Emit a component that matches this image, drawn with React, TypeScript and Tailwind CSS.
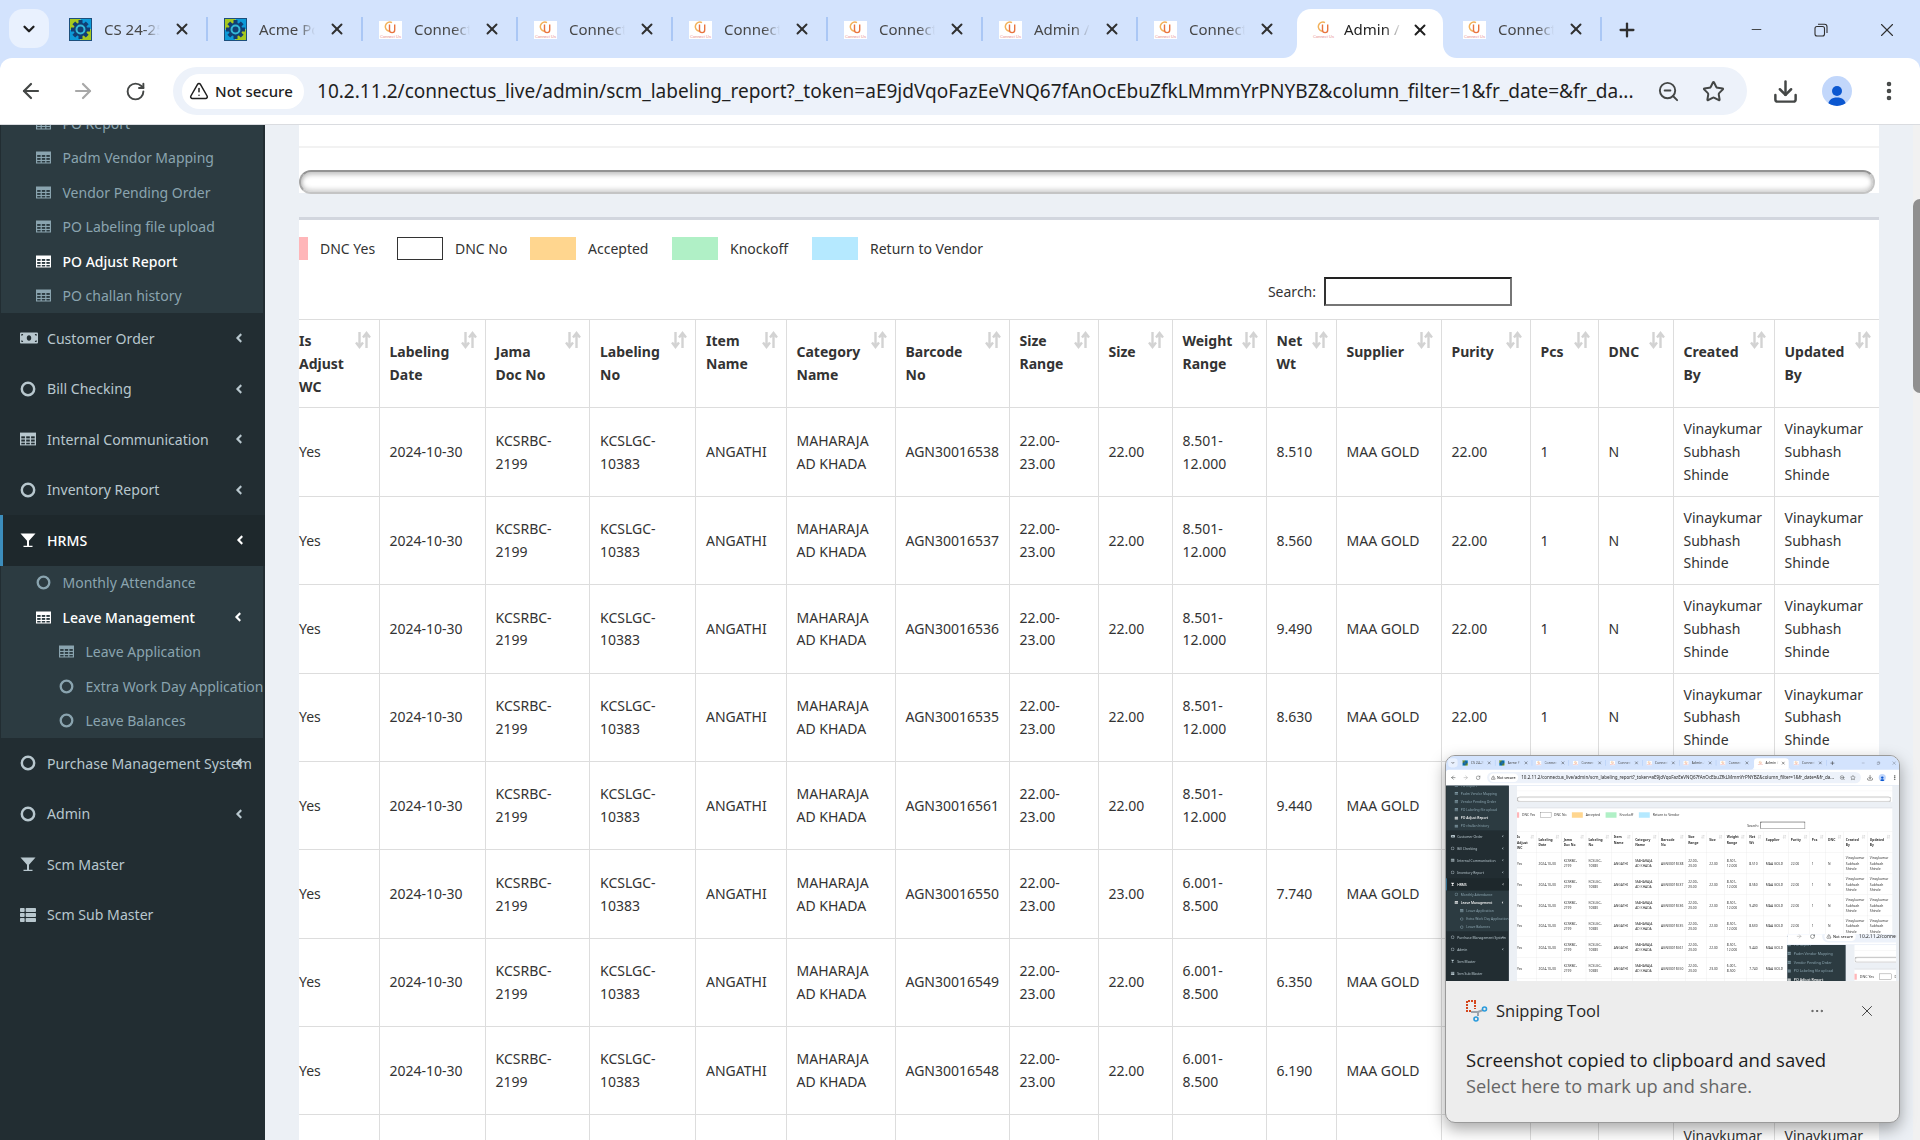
import React from 'react';
import {
  ArrowLeft,
  ArrowRight,
  ChevronDown,
  Download,
  EllipsisVertical,
  Minus,
  MoreHorizontal,
  Plus,
  RotateCw,
  Star,
  TriangleAlert,
  X,
  ZoomOut,
} from 'lucide-react';
import { FaAngleLeft, FaMoneyBill, FaThList } from 'react-icons/fa';

const tabs = [
  { title: 'CS 24-25', icon: 'gear' },
  { title: 'Acme Portal', icon: 'gear' },
  { title: 'Connectus', icon: 'cu' },
  { title: 'Connectus', icon: 'cu' },
  { title: 'Connectus', icon: 'cu' },
  { title: 'Connectus', icon: 'cu' },
  { title: 'Admin / Scm', icon: 'cu' },
  { title: 'Connectus', icon: 'cu' },
  { title: 'Admin / Scm', icon: 'cu', active: true },
  { title: 'Connectus', icon: 'cu' },
];

const URL_TEXT =
  '10.2.11.2/connectus_live/admin/scm_labeling_report?_token=aE9jdVqoFazEeVNQ67fAnOcEbuZfkLMmmYrPNYBZ&column_filter=1&fr_date=&fr_da...';

const legend = [
  { label: 'DNC Yes', item: 'w-[98px]', swatch: 'w-[9px] bg-[#ffb6b9]' },
  { label: 'DNC No', item: 'w-[133px]', swatch: 'w-[46px] bg-white border border-[#333]' },
  { label: 'Accepted', item: 'w-[142px]', swatch: 'w-[46px] bg-[#ffd68f]' },
  { label: 'Knockoff', item: 'w-[140px]', swatch: 'w-[46px] bg-[#b0f0c6]' },
  { label: 'Return to Vendor', item: 'w-[200px]', swatch: 'w-[46px] bg-[#b5e9ff]' },
];

const columns = [
  { lines: ['Is', 'Adjust', 'WC'], width: 'w-[80px]' },
  { lines: ['Labeling', 'Date'], width: 'w-[106px]' },
  { lines: ['Jama', 'Doc No'], width: 'w-[104.5px]' },
  { lines: ['Labeling', 'No'], width: 'w-[106px]' },
  { lines: ['Item', 'Name', '\u00a0'], width: 'w-[90.5px]' },
  { lines: ['Category', 'Name'], width: 'w-[109px]' },
  { lines: ['Barcode', 'No'], width: 'w-[114px]' },
  { lines: ['Size', 'Range', '\u00a0'], width: 'w-[89px]' },
  { lines: ['Size', '\u00a0'], width: 'w-[74px]' },
  { lines: ['Weight', 'Range', '\u00a0'], width: 'w-[94px]' },
  { lines: ['Net', 'Wt', '\u00a0'], width: 'w-[70px]' },
  { lines: ['Supplier', '\u00a0'], width: 'w-[105px]' },
  { lines: ['Purity', '\u00a0'], width: 'w-[89px]' },
  { lines: ['Pcs', '\u00a0'], width: 'w-[68px]' },
  { lines: ['DNC', '\u00a0'], width: 'w-[75px]' },
  { lines: ['Created', 'By'], width: 'w-[101px]' },
  { lines: ['Updated', 'By'], width: 'w-[105px]' },
];

const rows = [
  ['AGN30016538', '22.00', '8.501-12.000', '8.510'],
  ['AGN30016537', '22.00', '8.501-12.000', '8.560'],
  ['AGN30016536', '22.00', '8.501-12.000', '9.490'],
  ['AGN30016535', '22.00', '8.501-12.000', '8.630'],
  ['AGN30016561', '22.00', '8.501-12.000', '9.440'],
  ['AGN30016550', '23.00', '6.001-8.500', '7.740'],
  ['AGN30016549', '22.00', '6.001-8.500', '6.350'],
  ['AGN30016548', '22.00', '6.001-8.500', '6.190'],
  ['AGN30016547', '22.00', '6.001-8.500', '6.480'],
];

function GearIcon() {
  return (
    <svg width="23" height="23" viewBox="0 0 23 23" className="shrink-0">
      <rect width="11.5" height="11.5" fill="#a6c81e" />
      <rect x="11.5" width="11.5" height="11.5" fill="#0d9ad8" />
      <rect y="11.5" width="11.5" height="11.5" fill="#0d9ad8" />
      <rect x="11.5" y="11.5" width="11.5" height="11.5" fill="#a6c81e" />
      <rect x="0.5" y="0.5" width="22" height="22" fill="none" stroke="#1d4f7c" />
      <g stroke="#123f73" strokeWidth="4">
        <path d="M11.5 2v19M2 11.5h19M4.8 4.8l13.4 13.4M18.2 4.8L4.8 18.2" />
      </g>
      <circle cx="11.5" cy="11.5" r="6.8" fill="#123f73" />
      <circle cx="11.5" cy="11.5" r="4" fill="none" stroke="#33b8d8" strokeWidth="2" />
    </svg>
  );
}

function CuIcon() {
  return (
    <svg width="23" height="23" viewBox="0 0 23 23" className="shrink-0">
      <rect y="3" width="23" height="18" fill="#fff" />
      <path d="M13 4.6a4.6 4.6 0 1 0 -3 8.6" fill="none" stroke="#f2b15a" strokeWidth="1.5" />
      <path d="M10.5 6.5v5.5a2.6 2.6 0 0 0 5.2 0V6.5" fill="none" stroke="#e8743f" strokeWidth="1.4" />
      <text x="11.5" y="20" textAnchor="middle" fontSize="4" fill="#e88a8a" fontFamily="Liberation Sans, sans-serif">
        Connect Us
      </text>
    </svg>
  );
}

function Flare({ side }: { side: 'left' | 'right' }) {
  return (
    <svg
      width="14"
      height="14"
      viewBox="0 0 14 14"
      className={side === 'left' ? 'absolute bottom-0 left-[-14px]' : 'absolute bottom-0 right-[-14px] -scale-x-100'}
    >
      <path d="M0 14C8 14 14 8 14 0V14Z" fill="#fff" />
    </svg>
  );
}

function TabStrip() {
  return (
    <div className="flex h-[58px] shrink-0 items-start">
      <div className="ml-[9px] mt-[9px] flex h-[39px] w-[40px] shrink-0 items-center justify-center rounded-[14px] bg-[#e9f1fe]">
        <ChevronDown size={18} strokeWidth={3} className="text-[#1f1f1f]" />
      </div>
      <div className="ml-[4px] flex h-full">
        {tabs.map((tab, i) => {
          if (tab.active) {
            return (
              <div key={i} className="relative ml-[4px] mr-[4px] mt-[9px] flex h-[49px] w-[146px] shrink-0 items-center rounded-t-[14px] bg-white pb-[8px] pl-[15px]">
                <Flare side="left" />
                <Flare side="right" />
                <CuIcon />
                <span className="ml-[9px] w-[58px] overflow-hidden whitespace-nowrap text-[15px] text-[#1f1f1f] [mask-image:linear-gradient(to_right,black_70%,transparent)]">
                  {tab.title}
                </span>
                <X size={18} strokeWidth={2.6} className="ml-[9px] text-[#1f1f1f]" />
              </div>
            );
          }
          const sep = i === 7 ? '' : 'after:absolute after:right-0 after:top-[17px] after:h-[24px] after:w-[2px] after:bg-[#aac7f5]';
          return (
            <div key={i} className={`relative flex h-full w-[155px] shrink-0 items-center pl-[16px] ${sep}`}>
              <div className="flex w-[23px] shrink-0 justify-center">{tab.icon === 'gear' ? <GearIcon /> : <CuIcon />}</div>
              <span className="ml-[12px] w-[56px] overflow-hidden whitespace-nowrap text-[15px] text-[#474747] [mask-image:linear-gradient(to_right,black_70%,transparent)]">
                {tab.title}
              </span>
              <X size={18} strokeWidth={2.6} className="ml-[13px] text-[#303030]" />
            </div>
          );
        })}
      </div>
      <Plus size={22} strokeWidth={2.5} className="ml-[14px] mt-[19px] shrink-0 text-[#303030]" />
      <Minus size={15} strokeWidth={1.4} className="ml-[111px] mt-[22px] shrink-0 text-[#303030]" />
      <svg width="16" height="16" viewBox="0 0 16 16" className="ml-[49px] mt-[22px] shrink-0" fill="none" stroke="#303030" strokeWidth="1.1">
        <rect x="2" y="4.5" width="9.5" height="9.5" rx="2" />
        <path d="M5 2.2h6.5a2.5 2.5 0 0 1 2.5 2.5V11" />
      </svg>
      <X size={22} strokeWidth={1.2} className="ml-[47px] mt-[19px] shrink-0 text-[#303030]" />
    </div>
  );
}

function Toolbar() {
  return (
    <div className="flex h-[66px] shrink-0 items-center rounded-t-[12px] bg-white">
      <ArrowLeft size={24} strokeWidth={2.2} className="ml-[19px] shrink-0 text-[#444746]" />
      <ArrowRight size={24} strokeWidth={2.2} className="ml-[28px] shrink-0 text-[#a8a8a8]" />
      <RotateCw size={21} strokeWidth={2.2} className="ml-[30px] shrink-0 text-[#444746]" />
      <div className="ml-[27px] flex h-[48px] w-[1574px] shrink-0 items-center rounded-full bg-[#edf2fa] pl-[9px]">
        <div className="flex h-[35px] w-[122px] shrink-0 items-center rounded-full bg-white pl-[7px]">
          <TriangleAlert size={20} strokeWidth={1.8} className="text-[#1f1f1f]" />
          <span className="ml-[6px] whitespace-nowrap text-[15px] font-medium text-[#1f1f1f]">Not secure</span>
        </div>
        <span className="ml-[13px] w-[1321px] shrink-0 overflow-hidden whitespace-nowrap text-[19.05px] text-[#1f1f1f]">{URL_TEXT}</span>
        <ZoomOut size={23} strokeWidth={2} className="ml-[19px] shrink-0 text-[#444746]" />
        <Star size={23} strokeWidth={2.1} className="ml-[22px] shrink-0 text-[#444746]" />
      </div>
      <Download size={27} strokeWidth={2.2} className="ml-[25px] shrink-0 text-[#444746]" />
      <div className="ml-[23px] flex h-[30px] w-[30px] shrink-0 items-end justify-center overflow-hidden rounded-full bg-[#c2d7fb]">
        <svg width="20" height="24" viewBox="0 0 20 24" fill="#0b57d0">
          <circle cx="10" cy="9" r="5" />
          <path d="M1 24c0-6 4-8.5 9-8.5s9 2.5 9 8.5Z" />
        </svg>
      </div>
      <EllipsisVertical size={24} strokeWidth={2.6} className="ml-[25px] shrink-0 text-[#444746]" />
    </div>
  );
}

type IconProps = { size?: number; className?: string };
type IconType = React.ComponentType<IconProps>;

// the page's older icon set: table with a solid head row and a 3x3 grid
function GridIcon({ size = 15, className, hole }: IconProps & { hole: string }) {
  return (
    <svg width={size} height={size} viewBox="0 0 15 15" className={className}>
      <path d="M0 1.5h15v12H0Z" fill="currentColor" />
      {[5, 8, 11].map((y) =>
        [1.2, 5.8, 10.4].map((x) => <rect key={`${x}-${y}`} x={x} y={y} width="3.4" height={y === 11 ? 1.5 : 1.9} fill={hole} />),
      )}
    </svg>
  );
}

const TableIcon = (props: IconProps) => <GridIcon {...props} hole="#2c3b41" />;
const TableIconDark = (props: IconProps) => <GridIcon {...props} hole="#222d32" />;

function RingIcon({ size = 15, className }: IconProps) {
  return (
    <svg width={size} height={size} viewBox="0 0 15 15" className={className}>
      <circle cx="7.5" cy="7.5" r="5.8" fill="none" stroke="currentColor" strokeWidth="2.3" />
    </svg>
  );
}

function GlassIcon({ size = 16, className }: IconProps) {
  return (
    <svg width={size} height={size} viewBox="0 0 16 16" className={className}>
      <path d="M0.5 1.5h15L9 8.7v5h3.5V15h-9v-1.3H7v-5Z" fill="currentColor" />
    </svg>
  );
}

function SubItem({ icon: Icon, label, active, nested, chevron }: { icon: IconType; label: string; active?: boolean; nested?: boolean; chevron?: boolean }) {
  return (
    <div className={`relative flex h-[34.5px] items-center ${nested ? 'pl-[58px]' : 'pl-[35px]'} ${active ? 'text-white font-medium' : 'text-[#8aa4af]'}`}>
      <Icon size={15} className="shrink-0" />
      <span className="ml-[11.5px] text-[14px]">{label}</span>
      {chevron && <FaAngleLeft size={14} className="absolute left-[230px] text-white" />}
    </div>
  );
}

function MainItem({ icon: Icon, label, active, chevron = true, iconSize = 16 }: { icon: IconType; label: string; active?: boolean; chevron?: boolean; iconSize?: number }) {
  return (
    <div className={`relative flex h-[50.5px] items-center ${active ? 'border-l-[3px] border-[#3c8dbc] bg-[#1e282c] pl-[17px] font-medium text-white' : 'pl-[20px] text-[#b8c7ce]'}`}>
      <div className="flex w-[27px] shrink-0 items-center">
        <Icon size={iconSize} />
      </div>
      <span className="text-[14.1px]">{label}</span>
      {chevron && <FaAngleLeft size={14} className={`${active ? 'left-[230px] text-white' : 'left-[232px] text-[#b8c7ce]'} absolute`} />}
    </div>
  );
}

function Sidebar() {
  return (
    <div className="w-[265px] shrink-0 overflow-hidden whitespace-nowrap bg-[#222d32]">
      <div className="ml-px mr-[2px] -mt-[19px] bg-[#2c3b41]">
        <SubItem icon={TableIcon} label="PO Report" />
        <SubItem icon={TableIcon} label="Padm Vendor Mapping" />
        <SubItem icon={TableIcon} label="Vendor Pending Order" />
        <SubItem icon={TableIcon} label="PO Labeling file upload" />
        <SubItem icon={TableIcon} label="PO Adjust Report" active />
        <SubItem icon={TableIcon} label="PO challan history" />
      </div>
      <MainItem icon={FaMoneyBill} label="Customer Order" iconSize={18} />
      <MainItem icon={RingIcon} label="Bill Checking" />
      <MainItem icon={TableIconDark} label="Internal Communication" />
      <MainItem icon={RingIcon} label="Inventory Report" />
      <MainItem icon={GlassIcon} label="HRMS" active />
      <div className="ml-px mr-[2px] bg-[#2c3b41]">
        <SubItem icon={RingIcon} label="Monthly Attendance" />
        <SubItem icon={TableIcon} label="Leave Management" active chevron />
        <SubItem icon={TableIcon} label="Leave Application" nested />
        <SubItem icon={RingIcon} label="Extra Work Day Application" nested />
        <SubItem icon={RingIcon} label="Leave Balances" nested />
      </div>
      <MainItem icon={RingIcon} label="Purchase Management System" />
      <MainItem icon={RingIcon} label="Admin" />
      <MainItem icon={GlassIcon} label="Scm Master" chevron={false} />
      <MainItem icon={FaThList} label="Scm Sub Master" chevron={false} />
    </div>
  );
}

function SortIcon() {
  return (
    <svg width="16" height="18" viewBox="0 0 16 18" className="absolute right-[8px] top-[11px]" fill="none" stroke="#d3d3d3" strokeWidth="2.4">
      <path d="M4.5 1v14M1 11.5l3.5 4.5 3.5-4.5" />
      <path d="M11.5 17V3M8 6.5 11.5 2 15 6.5" />
    </svg>
  );
}

function ReportTable() {
  return (
    <table className="w-[1580px] table-fixed border-collapse text-[14px] leading-[22.86px] text-[#333]">
      <thead>
        <tr>
          {columns.map((col, i) => (
            <th key={i} className={`relative border border-[#ddd] px-[10px] pb-[8.8px] pt-[10px] text-left align-middle font-bold ${col.width} ${i === 0 ? 'border-l-0 pl-0' : ''} ${i === 16 ? 'border-r-0' : ''}`}>
              {col.lines.map((line, j) => (
                <div key={j}>{line}</div>
              ))}
              <SortIcon />
            </th>
          ))}
        </tr>
      </thead>
      <tbody>
        {rows.map((row, i) => {
          const cells = ['Yes', '2024-10-30', 'KCSRBC-2199', 'KCSLGC-10383', 'ANGATHI', 'MAHARAJA AD KHADA', row[0], '22.00-23.00', row[1], row[2], row[3], 'MAA GOLD', '22.00', '1', 'N', 'Vinaykumar Subhash Shinde', 'Vinaykumar Subhash Shinde'];
          return (
            <tr key={i}>
              {cells.map((cell, j) => (
                <td key={j} className={`border border-[#ddd] px-[10px] pb-[8.8px] pt-[10px] align-middle ${j === 0 ? 'border-l-0 pl-0' : ''} ${j === 16 ? 'border-r-0' : ''}`}>
                  {cell}
                </td>
              ))}
            </tr>
          );
        })}
      </tbody>
    </table>
  );
}

function Content() {
  return (
    <div className="min-w-0 flex-1 overflow-hidden bg-[#ecf0f5] pl-[34px] pr-[41px]">
      <div className="h-[23px] border-b-2 border-[#f2f2f2] bg-white" />
      <div className="h-[45px] bg-white pr-[4px] pt-[22px]">
        <div className="h-[24px] rounded-full border-2 border-b-[#c4c4c4] border-l-[#a5a5a5] border-r-[#c4c4c4] border-t-[#939393] bg-white shadow-[inset_0_3px_4px_rgba(0,0,0,0.22),inset_0_-3px_4px_rgba(0,0,0,0.16)]" />
      </div>
      <div className="mt-[24px] border-t-[3px] border-[#d2d6de] bg-white pt-[17px]">
        <div className="flex h-[23px] items-center text-[14px] text-[#333]">
          {legend.map((l) => (
            <div key={l.label} className={`flex h-full shrink-0 items-center ${l.item}`}>
              <span className={`h-full shrink-0 ${l.swatch}`} />
              <span className="ml-[12px] whitespace-nowrap">{l.label}</span>
            </div>
          ))}
        </div>
        <div className="mt-[17px] flex h-[29px] items-center justify-end pr-[367px] text-[14px] text-[#333]">
          <span>Search:</span>
          <input className="ml-[8px] h-[29px] w-[188px] border-2 border-b-[#767676] border-l-[#333] border-r-[#767676] border-t-[#222] bg-white" />
        </div>
        <div className="mt-[13px]">
          <ReportTable />
        </div>
      </div>
    </div>
  );
}

function SnipIcon() {
  return (
    <svg width="22" height="22" viewBox="0 0 22 22" fill="none" className="shrink-0">
      <path d="M1 6V1h9v1" stroke="#d4471d" strokeWidth="2" strokeDasharray="2 1" />
      <path d="M1 7v4h4" stroke="#d4471d" strokeWidth="2" strokeDasharray="2 1" />
      <path d="M9 2v7" stroke="#d4471d" strokeWidth="2" strokeDasharray="2 1" />
      <path d="M5 12h7l5-2M12 12v4" stroke="#9aa3ab" strokeWidth="2" />
      <circle cx="18.5" cy="9" r="2" stroke="#2a9bdc" strokeWidth="1.6" />
      <circle cx="10" cy="19" r="2" stroke="#2a9bdc" strokeWidth="1.6" />
    </svg>
  );
}

// toast picture: a shrunken copy of the page, the older toast inside it shows a bigger crop
function Toast({ depth }: { depth: number }) {
  return (
    <div className="absolute left-[1445px] top-[755px] h-[368px] w-[455px] overflow-hidden rounded-[10px] border border-[#9a9a9a] bg-[#ededed] shadow-[0_6px_16px_rgba(0,0,0,0.35)]">
      <div className="relative h-[225px] overflow-hidden bg-white blur-[0.3px]">
        <div className="absolute left-0 top-0 origin-top-left scale-[0.2375]">
          <Screen depth={depth + 1} />
        </div>
      </div>
      <div className="relative h-[143px] pl-[20px] pt-[18px] font-['Open_Sans',sans-serif]">
        <div className="flex items-center">
          <SnipIcon />
          <span className="ml-[8px] text-[16.5px] text-[#262626]">Snipping Tool</span>
        </div>
        <MoreHorizontal size={16} strokeWidth={1.5} className="absolute left-[363px] top-[22px] text-[#555]" />
        <X size={18} strokeWidth={1.2} className="absolute left-[412px] top-[21px] text-[#333]" />
        <div className="mt-[23px] whitespace-nowrap text-[18.5px] leading-[26px] text-[#1c1c1c]">Screenshot copied to clipboard and saved</div>
        <div className="whitespace-nowrap text-[18.2px] leading-[26px] text-[#666]">Select here to mark up and share.</div>
      </div>
    </div>
  );
}

function Screen({ depth }: { depth: number }) {
  return (
    <div className="relative flex h-[1140px] w-[1920px] flex-col overflow-hidden bg-[#d3e3fd] font-['Noto_Sans',sans-serif]">
      <TabStrip />
      <Toolbar />
      <div className="flex min-h-0 flex-1 border-t border-[#dadce0]">
        <Sidebar />
        <Content />
      </div>
      {/* page scrollbar */}
      <div className="absolute bottom-0 right-0 top-[125px] w-[7px] bg-[#f1f1f1]" />
      <div className="absolute right-0 top-[199px] h-[194px] w-[7px] rounded-l-full bg-[#8f8f8f]" />
      {depth === 0 && <Toast depth={depth} />}
      {depth === 1 && (
        <div className="absolute left-[1438px] top-[751px] h-[400px] w-[457px] overflow-hidden bg-white">
          <div className="origin-top-left translate-x-[-41px] translate-y-[-90px] scale-[1.08]">
            <Screen depth={2} />
          </div>
        </div>
      )}
    </div>
  );
}

export default function App() {
  return <Screen depth={0} />;
}
